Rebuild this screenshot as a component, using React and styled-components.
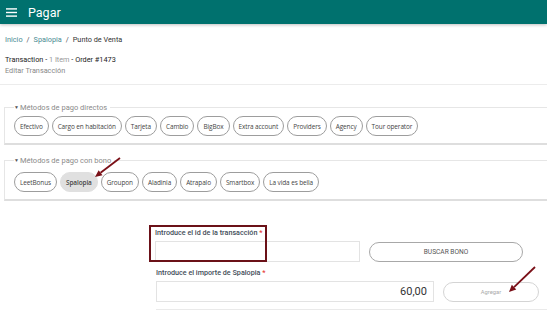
import React from 'react';
import styled, { createGlobalStyle } from 'styled-components';

const GlobalStyle = createGlobalStyle`
  html, body {
    margin: 0;
    padding: 0;
    background: #fff;
    overflow: hidden;
  }
  body {
    font-family: Roboto, "Liberation Sans", sans-serif;
  }
`;

const Page = styled.div`
  position: relative;
  width: 547px;
  height: 312px;
  overflow: hidden;
`;

const Header = styled.header`
  display: flex;
  align-items: center;
  height: 24px;
  padding-left: 6px;
  background: #00716e;
  box-shadow: 0 1px 3px rgba(0, 0, 0, 0.25);
`;

const Title = styled.h1`
  margin: 0 0 0 11px;
  font-size: 12.5px;
  font-weight: 400;
  color: #fff;
`;

const Content = styled.main`
  padding: 11px 0 0 5px;
`;

const Breadcrumb = styled.div`
  font-size: 7.3px;
  color: #333;
  line-height: 9px;
`;

const Crumb = styled.span`
  color: ${p => (p.active ? '#333' : '#4b8c92')};
`;

const Sep = styled.span`
  margin: 0 4px;
  color: #555;
`;

const TransLine = styled.div`
  margin-top: 10px;
  font-size: 7.3px;
  line-height: 11px;
  color: #222;
`;

const Muted = styled.span`
  color: #999;
`;

const EditLine = styled.div`
  font-size: 7.3px;
  line-height: 11px;
  color: #888;
`;

const Divider = styled.div`
  margin: 8px 0 0 -5px;
  height: 1px;
  background: #ececec;
`;

const Fieldset = styled.fieldset`
  margin: ${p => p.top}px -20px 0 -1px;
  padding: ${p => p.pt}px 0 7px 9px;
  border: 1px solid #e6e6e6;
  border-bottom: 2px solid #dedede;
  display: flex;
  gap: 3px;
  flex-wrap: wrap;
`;

const Legend = styled.legend`
  margin-left: 0;
  padding: 0 3px 0 0;
  font-size: 7.5px;
  color: #8a8a8a;
  line-height: 9px;
`;

const Caret = styled.span`
  font-size: 5px;
  color: #555;
  margin-right: 1px;
  vertical-align: 1px;
`;

const Pill = styled.button`
  height: 20px;
  padding: 0 5px;
  border: 1px solid #9d9d9d;
  border-radius: 10px;
  background: ${p => (p.selected ? '#e0e0e0' : '#fff')};
  font-family: "Open Sans", sans-serif;
  font-size: 6.45px;
  font-weight: ${p => (p.selected ? 600 : 400)};
  letter-spacing: -0.1px;
  color: #444;
  border-color: ${p => (p.selected ? '#e0e0e0' : '#9d9d9d')};
`;

const Form = styled.section`
  margin: 27px 0 0 150px;
  width: 392px;
  display: grid;
  row-gap: 6px;
`;

const Row = styled.div`
  display: flex;
  align-items: flex-end;
  gap: ${p => p.gap}px;
`;

const Field = styled.div`
  display: flex;
  flex-direction: column;
  width: ${p => p.w}px;
  padding-left: ${p => p.pl}px;
`;

const Label = styled.label`
  font-size: 7.2px;
  font-weight: 500;
  color: #424c58;
  line-height: 9px;
  margin-bottom: 4px;
`;

const Req = styled.span`
  color: #e53935;
`;

const Input = styled.div`
  height: 19px;
  border: 1px solid #e3e3e3;
  display: flex;
  align-items: center;
  justify-content: flex-end;
  padding-right: 6px;
  font-size: 11px;
  color: #333;
`;

const RoundButton = styled.button`
  width: ${p => p.w}px;
  height: ${p => p.h}px;
  border: 1px solid ${p => (p.disabled ? '#d4d4d4' : '#a8a8a8')};
  border-radius: 10px;
  background: #fff;
  font-family: Roboto, sans-serif;
  font-size: ${p => (p.disabled ? 5.8 : 6.6)}px;
  color: ${p => (p.disabled ? '#aaa' : '#555')};
`;

const BottomRule = styled.div`
  margin: 7px 0 0 156px;
  height: 1px;
  background: #eaeaea;
`;

const Highlight = styled.div`
  position: absolute;
  left: 149px;
  top: 225px;
  width: 114px;
  height: 33px;
  border: 2px solid #6b1118;
  pointer-events: none;
`;

const ArrowSvg = styled.svg`
  position: absolute;
  left: 0;
  top: 0;
  pointer-events: none;
`;

const Hamburger = () => (
  <svg width="11" height="9" viewBox="0 0 11 9">
    <rect x="0" y="0.2" width="11" height="1.4" fill="#fff" />
    <rect x="0" y="3.8" width="11" height="1.4" fill="#fff" />
    <rect x="0" y="7.4" width="11" height="1.4" fill="#fff" />
  </svg>
);

const Arrow = ({ x1, y1, x2, y2 }) => {
  const a = Math.atan2(y2 - y1, x2 - x1);
  const len = 7;
  const w = 3.2;
  const bx = x2 - len * Math.cos(a);
  const by = y2 - len * Math.sin(a);
  const px = -Math.sin(a) * w;
  const py = Math.cos(a) * w;
  return (
    <g>
      <line x1={x1} y1={y1} x2={bx} y2={by} stroke="#7a1018" strokeWidth="1.8" />
      <polygon points={`${x2},${y2} ${bx + px},${by + py} ${bx - px},${by - py}`} fill="#7a1018" />
    </g>
  );
};

const direct = ['Efectivo', 'Cargo en habitación', 'Tarjeta', 'Cambio', 'BigBox', 'Extra account', 'Providers', 'Agency', 'Tour operator'];
const bono = ['LeetBonus', 'Spalopia', 'Groupon', 'Aladinia', 'Atrapalo', 'Smartbox', 'La vida es bella'];

export default function App() {
  return (
    <Page>
      <GlobalStyle />
      <Header>
        <Hamburger />
        <Title>Pagar</Title>
      </Header>
      <Content>
        <Breadcrumb>
          <Crumb>Inicio</Crumb>
          <Sep>/</Sep>
          <Crumb>Spalopia</Crumb>
          <Sep>/</Sep>
          <Crumb active>Punto de Venta</Crumb>
        </Breadcrumb>
        <TransLine>
          Transaction - <Muted>1 Item</Muted> - Order #1473
        </TransLine>
        <EditLine>Editar Transacción</EditLine>
        <Divider />
        <Fieldset top={18} pt={4}>
          <Legend><Caret>▼</Caret>Métodos de pago directos</Legend>
          {direct.map(d => <Pill key={d}>{d}</Pill>)}
        </Fieldset>
        <Fieldset top={11} pt={7}>
          <Legend><Caret>▼</Caret>Métodos de pago con bono</Legend>
          {bono.map(b => <Pill key={b} selected={b === 'Spalopia'}>{b}</Pill>)}
        </Fieldset>
      </Content>
      <Form>
        <Row gap={9}>
          <Field w={205} pl={5}>
            <Label>Introduce el id de la transacción <Req>*</Req></Label>
            <Input />
          </Field>
          <RoundButton w={154} h={20}>BUSCAR BONO</RoundButton>
        </Row>
        <Row gap={9}>
          <Field w={278} pl={6}>
            <Label>Introduce el importe de Spalopia <Req>*</Req></Label>
            <Input>60,00</Input>
          </Field>
          <RoundButton w={96} h={20} disabled>Agregar</RoundButton>
        </Row>
      </Form>
      <BottomRule />
      <Highlight />
      <ArrowSvg width="547" height="312">
        <Arrow x1={120} y1={158} x2={95} y2={177} />
        <Arrow x1={535} y1={267} x2={509} y2={292} />
      </ArrowSvg>
    </Page>
  );
}
